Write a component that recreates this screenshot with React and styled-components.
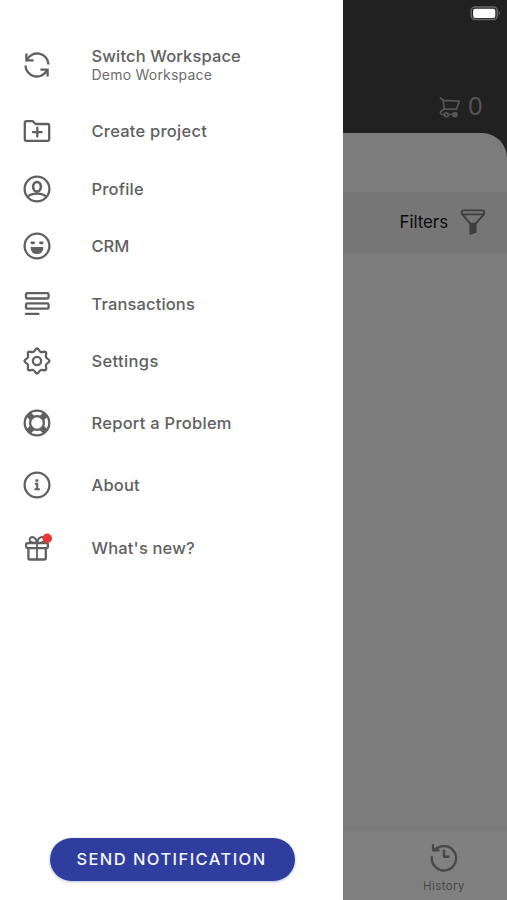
import React from "react";
import styled, { createGlobalStyle } from "styled-components";

const GlobalStyle = createGlobalStyle`
  * { box-sizing: border-box; }
  body { margin: 0; background: #fff; }
`;

const Screen = styled.div`
  display: flex;
  width: 507px;
  height: 900px;
  overflow: hidden;
  font-family: Inter, "Liberation Sans", sans-serif;
`;

const Drawer = styled.aside`
  display: flex;
  flex-direction: column;
  width: 343px;
  background: #fff;
  color: #606060;
`;

const Menu = styled.nav`
  display: flex;
  flex-direction: column;
  padding-top: 27.3px;
`;

const MenuRow = styled.div`
  display: flex;
  align-items: center;
  gap: 40.5px;
  height: ${(p) => p.$height}px;
  padding-left: 23px;
`;

const Divider = styled.div`
  height: 2px;
`;

const Labels = styled.div`
  display: flex;
  flex-direction: column;
  white-space: nowrap;
`;

const Label = styled.span`
  font-size: 16.5px;
  font-weight: 500;
  line-height: 20px;
  letter-spacing: ${(p) => p.$spacing || 0}px;
`;

const SubLabel = styled.span`
  font-size: 14px;
  line-height: 18px;
  letter-spacing: 0.22px;
  color: #6c6c6c;
`;

const Icon = styled.svg`
  display: block;
  flex: none;
  overflow: visible;
  fill: none;
  stroke: currentColor;
  stroke-width: 2.3;
  stroke-linecap: round;
  stroke-linejoin: round;
`;

const DrawerFooter = styled.div`
  display: flex;
  justify-content: center;
  margin-top: auto;
  padding: 0 0 19px 1px;
`;

const SendButton = styled.button`
  width: 245px;
  height: 43px;
  padding: 0 1px 2px 0;
  border: 0;
  border-radius: 22px;
  background: #2f3e9e;
  box-shadow: 0 1px 3px rgba(47, 62, 158, 0.35);
  color: #f2f4ff;
  font-family: inherit;
  font-size: 16.5px;
  font-weight: 500;
  letter-spacing: 1.43px;
  white-space: nowrap;
`;

const Backdrop = styled.main`
  display: flex;
  flex: 1;
  flex-direction: column;
  background: #212121;
`;

const StatusBar = styled.div`
  display: flex;
  justify-content: flex-end;
  height: 27px;
  padding: 6px 6px 0 0;
`;

const CartBar = styled.div`
  display: flex;
  flex: none;
  align-items: center;
  justify-content: flex-end;
  gap: 7px;
  height: 106px;
  padding: 53px 24px 0 0;
  color: #555;
`;

const CartCount = styled.span`
  font-size: 24px;
  line-height: 28px;
`;

const Sheet = styled.section`
  display: flex;
  flex: 1;
  flex-direction: column;
  border-top-right-radius: 25px;
  background: #7c7c7c;
`;

const FilterBar = styled.div`
  display: flex;
  align-items: center;
  justify-content: flex-end;
  gap: 12px;
  height: 61px;
  margin-top: 59px;
  padding: 0 21px 2px 0;
  background: #767676;
  color: #0b0b0b;
  font-size: 17px;
  letter-spacing: -0.1px;
`;

const TabBar = styled.div`
  display: flex;
  justify-content: flex-end;
  height: 69px;
  margin-top: auto;
  padding-right: 42px;
  background: #808080;
`;

const Tab = styled.div`
  display: flex;
  flex-direction: column;
  align-items: center;
  gap: 8px;
  padding-top: 12px;
  color: #484848;
  font-size: 11.5px;
  line-height: 14px;
  letter-spacing: 0.45px;
`;

// Eight rounded teeth around the centre of a 28px box.
function gearPath() {
  const tooth = [[11.6, 4.9], [12.2, 1.5], [14, 1.5], [15.8, 1.5], [16.4, 4.9], [17.8, 4.85]];
  let d = "M10.2 4.85";
  for (let i = 0; i < 8; i += 1) {
    const a = (i * Math.PI) / 4;
    const pts = tooth.map(([x, y]) => {
      const dx = x - 14;
      const dy = y - 14;
      const px = 14 + dx * Math.cos(a) - dy * Math.sin(a);
      const py = 14 + dx * Math.sin(a) + dy * Math.cos(a);
      return `${px.toFixed(2)} ${py.toFixed(2)}`;
    });
    d += `C${pts.join(" ")}`;
  }
  return `${d}Z`;
}

const glyphs = {
  switch: (
    <g strokeLinecap="butt" strokeLinejoin="miter">
      <path d="M3.8 9.4A11.3 11.3 0 0 1 25.5 13.6M24.2 18.6A11.3 11.3 0 0 1 2.5 14.4" />
      <path d="M3.4 2.4V9.4H10.6M24.6 25.6V18.6H17.4" />
    </g>
  ),
  folder: (
    <path d="M3.6 4.2H9.8L12.6 7H24.4Q26.2 7 26.2 8.8V22Q26.2 23.8 24.4 23.8H3.6Q1.8 23.8 1.8 22V6Q1.8 4.2 3.6 4.2ZM14.3 10.7V19.5M9.9 15.1H18.7" />
  ),
  profile: (
    <>
      <circle cx="14" cy="14" r="12.4" />
      <ellipse cx="14" cy="11.8" rx="3.9" ry="4.8" strokeWidth="2.6" />
      <path d="M4.7 21.8C8.8 17.6 19.2 17.6 23.3 21.8" />
    </>
  ),
  smile: (
    <>
      <circle cx="14" cy="14" r="12.4" />
      <path d="M8.8 10.8H10.6M17.4 10.8H19.2" strokeWidth="2.7" />
      <path d="M8.2 15.7H19.8Q19.5 21.4 14 21.4T8.2 15.7Z" fill="currentColor" strokeWidth="1.2" />
    </>
  ),
  list: (
    <>
      <rect x="3" y="3.2" width="22.6" height="5.3" rx="1.3" />
      <rect x="3" y="13.4" width="22.6" height="5.3" rx="1.3" />
      <path d="M2.8 23.8H15.5" />
    </>
  ),
  gear: (
    <>
      <path d={gearPath()} />
      <circle cx="14" cy="14" r="4.1" />
    </>
  ),
  buoy: (
    <>
      <circle cx="14" cy="14" r="12.3" />
      <circle cx="14" cy="14" r="6.9" />
      <g strokeWidth="6" strokeLinecap="butt">
        <path d="M5.2 5.2L9.2 9.2M22.8 5.2L18.8 9.2M5.2 22.8L9.2 18.8M22.8 22.8L18.8 18.8" />
      </g>
    </>
  ),
  info: (
    <>
      <circle cx="14" cy="14" r="12.4" />
      <path d="M11.8 12.8H14.2V18.3M11.4 18.2H16.8" strokeWidth="2.1" strokeLinecap="butt" />
      <circle cx="13.9" cy="9.4" r="1.5" fill="currentColor" stroke="none" />
    </>
  ),
  gift: (
    <>
      <rect x="3.1" y="9.1" width="21.8" height="5" rx="1.5" />
      <path d="M5.4 14.2V24Q5.4 25.5 6.9 25.5H21.3Q22.8 25.5 22.8 24V14.2" />
      <path d="M14 9V25.5" strokeWidth="1.8" />
      <path d="M13.2 8.8Q6.6 8.8 6.6 6C6.6 1.6 13.2 2 13.6 8.6M14.8 8.8Q21.4 8.8 21.4 6C21.4 1.6 14.8 2 14.4 8.6" strokeWidth="2" />
      <circle cx="24.2" cy="4.3" r="4.8" fill="#e53935" stroke="none" />
    </>
  ),
};

const items = [
  { icon: "switch", label: "Switch Workspace", sub: "Demo Workspace", height: 75, spacing: 0.14 },
  { icon: "folder", label: "Create project", height: 57.5, spacing: 0.24 },
  { icon: "profile", label: "Profile", height: 57.5, spacing: 0.2 },
  { icon: "smile", label: "CRM", height: 57.5 },
  { icon: "list", label: "Transactions", height: 57.5, spacing: 0.14 },
  { icon: "gear", label: "Settings", height: 57.5, spacing: 0.36 },
  { icon: "buoy", label: "Report a Problem", height: 62.4, divided: true, spacing: 0.26 },
  { icon: "info", label: "About", height: 62.4, spacing: 0.2 },
  { icon: "gift", label: "What's new?", height: 62.4, spacing: 0.16 },
];

function Battery() {
  return (
    <svg width="31" height="15" viewBox="0 0 31 15">
      <rect x="1.2" y="1" width="26" height="12.6" rx="3.8" fill="#212121" stroke="#666" strokeWidth="1.5" />
      <rect x="3.1" y="2.7" width="22.2" height="9.2" rx="2" fill="#fff" />
      <path d="M28.7 5.1Q31 7.3 28.7 9.5Z" fill="#666" />
    </svg>
  );
}

function Cart() {
  return (
    <Icon width="22" height="22" viewBox="0 0 22 22">
      <g strokeWidth="1.7">
        <path d="M1.4 1.8L4.2 4.3L20.3 5.2L17.4 13.2H5.2L4.2 4.3M5.2 13.2L3 14.4Q1.3 15.2 1.4 16.7T3.7 18.7H5.6" />
        <circle cx="7.4" cy="18.7" r="1.9" />
        <path d="M9.5 18.5H13.6" />
        <circle cx="16" cy="18.6" r="2.1" fill="currentColor" />
      </g>
    </Icon>
  );
}

function Funnel() {
  return (
    <Icon width="26" height="28" viewBox="0 0 26 28" color="#3e3e3e">
      <rect x="1.6" y="2.4" width="22.8" height="4" rx="2" strokeWidth="1.9" />
      <path d="M2.5 6.7L10.1 15.4M23.5 6.7L15.9 15.4" strokeWidth="2" />
      <path d="M10 15.3H16V24.2L10 26.3Z" fill="currentColor" strokeWidth="1.2" />
    </Icon>
  );
}

function HistoryIcon() {
  return (
    <Icon width="28" height="28" viewBox="0 0 28 28">
      <path d="M4.6 7.4A12.2 12.2 0 1 1 1.8 14" strokeWidth="2.3" />
      <path d="M3 2V7.4H8.6M3.6 7.2L8.4 4.2" strokeWidth="2.2" />
      <path d="M14 6.8V13.8H19.4" strokeWidth="2.5" strokeLinecap="butt" />
    </Icon>
  );
}

export default function App() {
  return (
    <>
      <GlobalStyle />
      <Screen>
        <Drawer>
          <Menu>
            {items.map((item) => (
              <React.Fragment key={item.label}>
                {item.divided && <Divider />}
                <MenuRow $height={item.height}>
                  <Icon width="28" height="28" viewBox="0 0 28 28">
                    {glyphs[item.icon]}
                  </Icon>
                  <Labels>
                    <Label $spacing={item.spacing}>{item.label}</Label>
                    {item.sub && <SubLabel>{item.sub}</SubLabel>}
                  </Labels>
                </MenuRow>
              </React.Fragment>
            ))}
          </Menu>
          <DrawerFooter>
            <SendButton>SEND NOTIFICATION</SendButton>
          </DrawerFooter>
        </Drawer>
        <Backdrop>
          <StatusBar>
            <Battery />
          </StatusBar>
          <CartBar>
            <Cart />
            <CartCount>0</CartCount>
          </CartBar>
          <Sheet>
            <FilterBar>
              <span>Filters</span>
              <Funnel />
            </FilterBar>
            <TabBar>
              <Tab>
                <HistoryIcon />
                <span>History</span>
              </Tab>
            </TabBar>
          </Sheet>
        </Backdrop>
      </Screen>
    </>
  );
}
